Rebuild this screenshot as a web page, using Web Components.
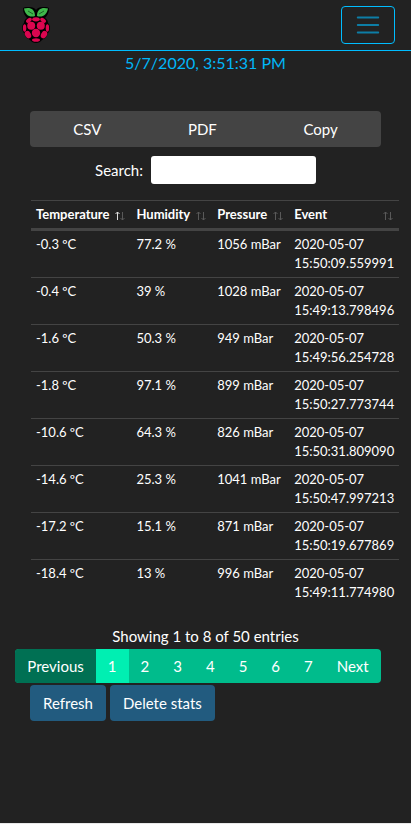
<!DOCTYPE html>
<html lang="en">
<head>
<meta charset="utf-8">
<meta name="viewport" content="width=device-width, initial-scale=1">
<title>Sensor statistics</title>
<style>
html { background: #222; }
body { margin: 0; background: #222; color: #fff; font: 15px/22px Lato, "Open Sans", sans-serif; }
</style>
</head>
<body>
<stats-app></stats-app>
<script>
const define = (name, html, setup) => {
  const template = document.createElement('template');
  template.innerHTML = html;
  customElements.define(name, class extends HTMLElement {
    constructor() {
      super();
      this.attachShadow({ mode: 'open' }).append(template.content.cloneNode(true));
    }
    connectedCallback() { if (setup) setup(this, this.shadowRoot); }
  });
};

define('berry-logo', `
<style>:host { display: block; } svg { display: block; }</style>
<svg width="28" height="36" viewBox="0 0 28 36" role="img" aria-label="Raspberry">
  <path fill="#000" d="M7 0C4 0 1 0 1 2c0 4 2 7 4 9-2 1-3 3-3 5-3 3-2 8 0 10 1 4 4 6 6 7 3 4 9 4 12 0 2-1 5-3 6-7 2-2 3-7 0-10 0-2-1-4-3-5 2-2 4-5 4-9 0-2-3-2-6-2-3 0-6 1-7 3-1-2-4-3-7-3z"/>
  <path fill="#3fb74b" d="M2 1.5C7 0 13 1 13 9 8 11 3 8 2 1.5zM26 1.5C21 0 15 1 15 9c5 2 10-1 11-7.5z"/>
  <path fill="none" stroke="#154a1d" stroke-width=".8" d="M6 4l5 3M22 4l-5 3"/>
  <g fill="#dc0650">
    <ellipse cx="14" cy="12.3" rx="3.8" ry="2.1"/>
    <ellipse cx="6.9" cy="13.3" rx="3.2" ry="2" transform="rotate(-38 6.9 13.3)"/>
    <ellipse cx="21.1" cy="13.3" rx="3.2" ry="2" transform="rotate(38 21.1 13.3)"/>
    <ellipse cx="9.2" cy="18.7" rx="4" ry="4"/>
    <ellipse cx="18.8" cy="18.7" rx="4" ry="4"/>
    <ellipse cx="2.6" cy="21" rx="1.7" ry="3.7"/>
    <ellipse cx="25.4" cy="21" rx="1.7" ry="3.7"/>
    <circle cx="14" cy="26" r="4.2"/>
    <ellipse cx="6" cy="27.6" rx="2.9" ry="4" transform="rotate(-30 6 27.6)"/>
    <ellipse cx="22" cy="27.6" rx="2.9" ry="4" transform="rotate(30 22 27.6)"/>
    <ellipse cx="14" cy="33" rx="4" ry="1.8"/>
  </g>
</svg>`);

define('nav-bar', `
<style>
:host { display: flex; align-items: center; justify-content: space-between; box-sizing: border-box; height: 51px; padding: 0 16px 0 22px; border-bottom: 1px solid #00bdff; }
button { display: grid; place-items: center; box-sizing: border-box; width: 54px; height: 38px; padding: 0; background: none; border: 1px solid #00bdff; border-radius: 4px; }
svg { display: block; }
</style>
<slot></slot>
<button type="button" aria-label="Toggle navigation"><svg width="28" height="28" viewBox="0 0 30 30"><path stroke="#00bdff" stroke-opacity=".6" stroke-width="2" stroke-linecap="round" stroke-miterlimit="10" d="M4 7h22M4 15h22M4 23h22"/></svg></button>`);

define('export-bar', `
<style>
:host { display: flex; background: #444; border-radius: 4px; overflow: hidden; }
button { flex: 1 1 auto; height: 36px; padding: 0 12px; border: 0; background: none; color: inherit; font: inherit; }
</style>
<button type="button">CSV</button><button type="button">PDF</button><button type="button">Copy</button>`);

define('search-field', `
<style>
:host { display: flex; justify-content: center; }
label { display: flex; align-items: center; gap: 8px; }
input { box-sizing: border-box; width: 165px; height: 28px; padding: 4px 8px; border: 0; border-radius: 3px; background: #fff; font: inherit; }
</style>
<label>Search: <input type="search"></label>`);

const readings = [
  ['-0.3', '77.2', '1056', '15:50:09.559991'],
  ['-0.4', '39', '1028', '15:49:13.798496'],
  ['-1.6', '50.3', '949', '15:49:56.254728'],
  ['-1.8', '97.1', '899', '15:50:27.773744'],
  ['-10.6', '64.3', '826', '15:50:31.809090'],
  ['-14.6', '25.3', '1041', '15:50:47.997213'],
  ['-17.2', '15.1', '871', '15:50:19.677869'],
  ['-18.4', '13', '996', '15:49:11.774980']
];

define('readings-table', `
<style>
:host { display: block; font-size: 13px; line-height: 19px; }
table { width: 100%; border-collapse: separate; border-spacing: 0; }
th, td { padding: 4px 5px; border-top: 1px solid #444; text-align: left; vertical-align: top; white-space: nowrap; }
th { border-bottom: 3px solid #444; }
tbody tr:first-child td { border-top: 0; }
.head { display: flex; justify-content: space-between; gap: 5px; }
.head svg { display: block; margin-top: 6px; }
</style>
<table><thead><tr></tr></thead><tbody></tbody></table>`, (host, root) => {
  root.querySelector('thead tr').innerHTML = ['Temperature', 'Humidity', 'Pressure', 'Event'].map((t, i) =>
    `<th scope="col"${i ? '' : ' aria-sort="ascending"'}><span class="head">${t}<svg width="12" height="10" viewBox="0 0 12 10" fill="none" stroke="#595959" aria-hidden="true"><path stroke="${i ? '#595959' : '#ddd'}" d="M3.5 9V1M1.5 3l2-2 2 2"/><path d="M8.5 1v8M6.5 7l2 2 2-2"/></svg></span></th>`).join('');
  root.querySelector('tbody').innerHTML = readings.map(([t, h, p, e]) =>
    `<tr><td>${t} ºC</td><td>${h} %</td><td>${p} mBar</td><td>2020-05-07<br>${e}</td></tr>`).join('');
});

define('page-list', `
<style>
:host { display: flex; justify-content: center; }
nav { display: flex; overflow: hidden; border-radius: 4px; background: #00bc8c; }
a { box-sizing: border-box; height: 34px; padding: 6px 12px; color: #fff; text-decoration: none; white-space: nowrap; }
.off { background: #007053; }
.on { background: #00efb2; }
</style>
<nav aria-label="Table pages"><a class="off" href="#" aria-disabled="true">Previous</a><a class="on" href="#" aria-current="page">1</a><a href="#">2</a><a href="#">3</a><a href="#">4</a><a href="#">5</a><a href="#">6</a><a href="#">7</a><a href="#">Next</a></nav>`);

define('action-button', `
<style>
:host { display: block; }
button { height: 36px; padding: 0 13px; border: 0; border-radius: 4px; background: #225b7f; color: #fff; font: inherit; }
</style>
<button type="button"><slot></slot></button>`);

define('stats-app', `
<style>
:host { display: flex; flex-direction: column; box-sizing: border-box; min-height: 100vh; border-bottom: 1px solid #e8e8e8; }
time { color: #00b7f8; font-size: 16px; line-height: 24px; text-align: center; }
main { padding: 36px 30px 0; }
search-field { padding: 9px 0 16px; }
readings-table { margin: 0 -18px 0 1px; }
.info { padding: 18px 0 1px; text-align: center; line-height: 24px; }
page-list { margin: 0 0 2px -15px; }
.actions { display: flex; gap: 4px; }
</style>
<nav-bar><berry-logo></berry-logo></nav-bar>
<time datetime="2020-05-07T15:51:31">5/7/2020, 3:51:31 PM</time>
<main>
<export-bar></export-bar>
<search-field></search-field>
<readings-table></readings-table>
<div class="info">Showing 1 to 8 of 50 entries</div>
<page-list></page-list>
<div class="actions"><action-button>Refresh</action-button><action-button>Delete stats</action-button></div>
</main>`);
</script>
</body>
</html>
